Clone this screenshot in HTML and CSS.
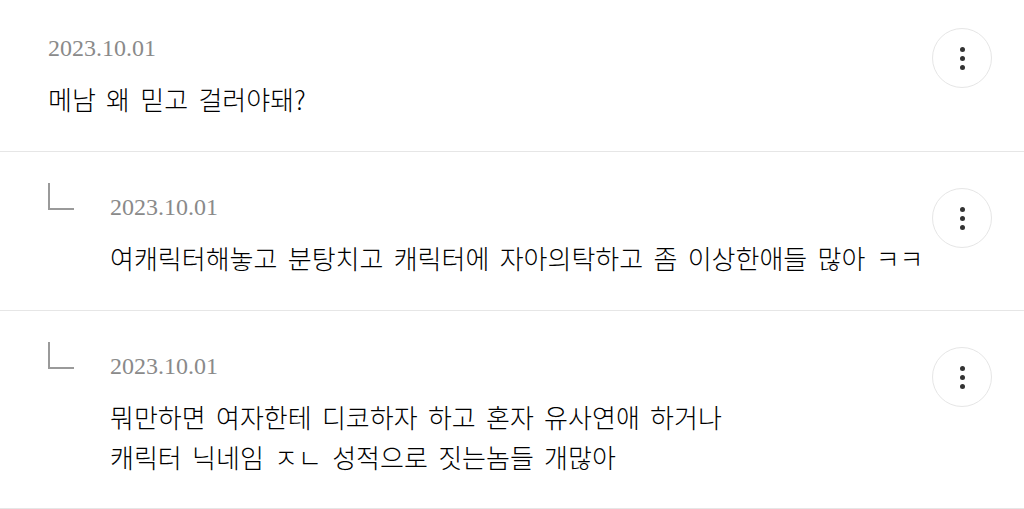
FILE: index.html
```html
<!DOCTYPE html>
<html lang="ko">
<head>
<meta charset="utf-8">
<link rel="stylesheet" href="styles.css">
</head>
<body>
<ul class="comments">
  <li class="comment comment-first">
    <div class="body">
      <div class="date">2023.10.01</div>
      <p class="text">메남 왜 믿고 걸러야돼?</p>
    </div>
    <button class="more" aria-label="더보기"><span class="dot"></span><span class="dot"></span><span class="dot"></span></button>
  </li>
  <li class="comment comment-reply">
    <span class="reply-mark"></span>
    <div class="body">
      <div class="date">2023.10.01</div>
      <p class="text">여캐릭터해놓고 분탕치고 캐릭터에 자아의탁하고 좀 이상한애들 많아 ㅋㅋ</p>
    </div>
    <button class="more" aria-label="더보기"><span class="dot"></span><span class="dot"></span><span class="dot"></span></button>
  </li>
  <li class="comment comment-reply comment-last">
    <span class="reply-mark"></span>
    <div class="body">
      <div class="date">2023.10.01</div>
      <p class="text">뭐만하면 여자한테 디코하자 하고 혼자 유사연애 하거나<br>캐릭터 닉네임 ㅈㄴ 성적으로 짓는놈들 개많아</p>
    </div>
    <button class="more" aria-label="더보기"><span class="dot"></span><span class="dot"></span><span class="dot"></span></button>
  </li>
</ul>
</body>
</html>
```

FILE: styles.css
```css
html, body {
  margin: 0;
  padding: 0;
  background: #ffffff;
}

.comments {
  list-style: none;
  margin: 0;
  padding: 0;
}

.comment {
  display: flex;
  align-items: flex-start;
  padding: 36px 32px 32px 48px;
  border-bottom: 1px solid #e6e6e6;
}

.comment-first {
  padding-top: 29px;
}

.comment-last {
  padding-bottom: 31px;
}

.comment-first .more {
  margin-top: -1px;
}

.reply-mark {
  flex: 0 0 auto;
  box-sizing: border-box;
  width: 26px;
  height: 27px;
  margin-top: -5px;
  margin-right: 36px;
  border-left: 2.5px solid #9a9a9a;
  border-bottom: 2.5px solid #9a9a9a;
}

.body {
  flex: 1 1 auto;
  min-width: 0;
}

.date {
  font-family: "Liberation Serif", "Times New Roman", serif;
  font-size: 24px;
  line-height: 38px;
  color: #8a8a8a;
}

.text {
  margin: 12px 0 0;
  font-family: "Noto Sans CJK KR", "Noto Sans", sans-serif;
  font-weight: 300;
  font-size: 26px;
  line-height: 40px;
  color: #000000;
  word-spacing: 3px;
}

.more {
  flex: 0 0 auto;
  width: 60px;
  height: 60px;
  box-sizing: border-box;
  border: 1.5px solid #e6e6e6;
  border-radius: 50%;
  background: #ffffff;
  padding: 0;
  display: flex;
  flex-direction: column;
  align-items: center;
  justify-content: center;
  gap: 4px;
}

.dot {
  display: block;
  width: 5px;
  height: 5px;
  border-radius: 50%;
  background: #333333;
}
```
